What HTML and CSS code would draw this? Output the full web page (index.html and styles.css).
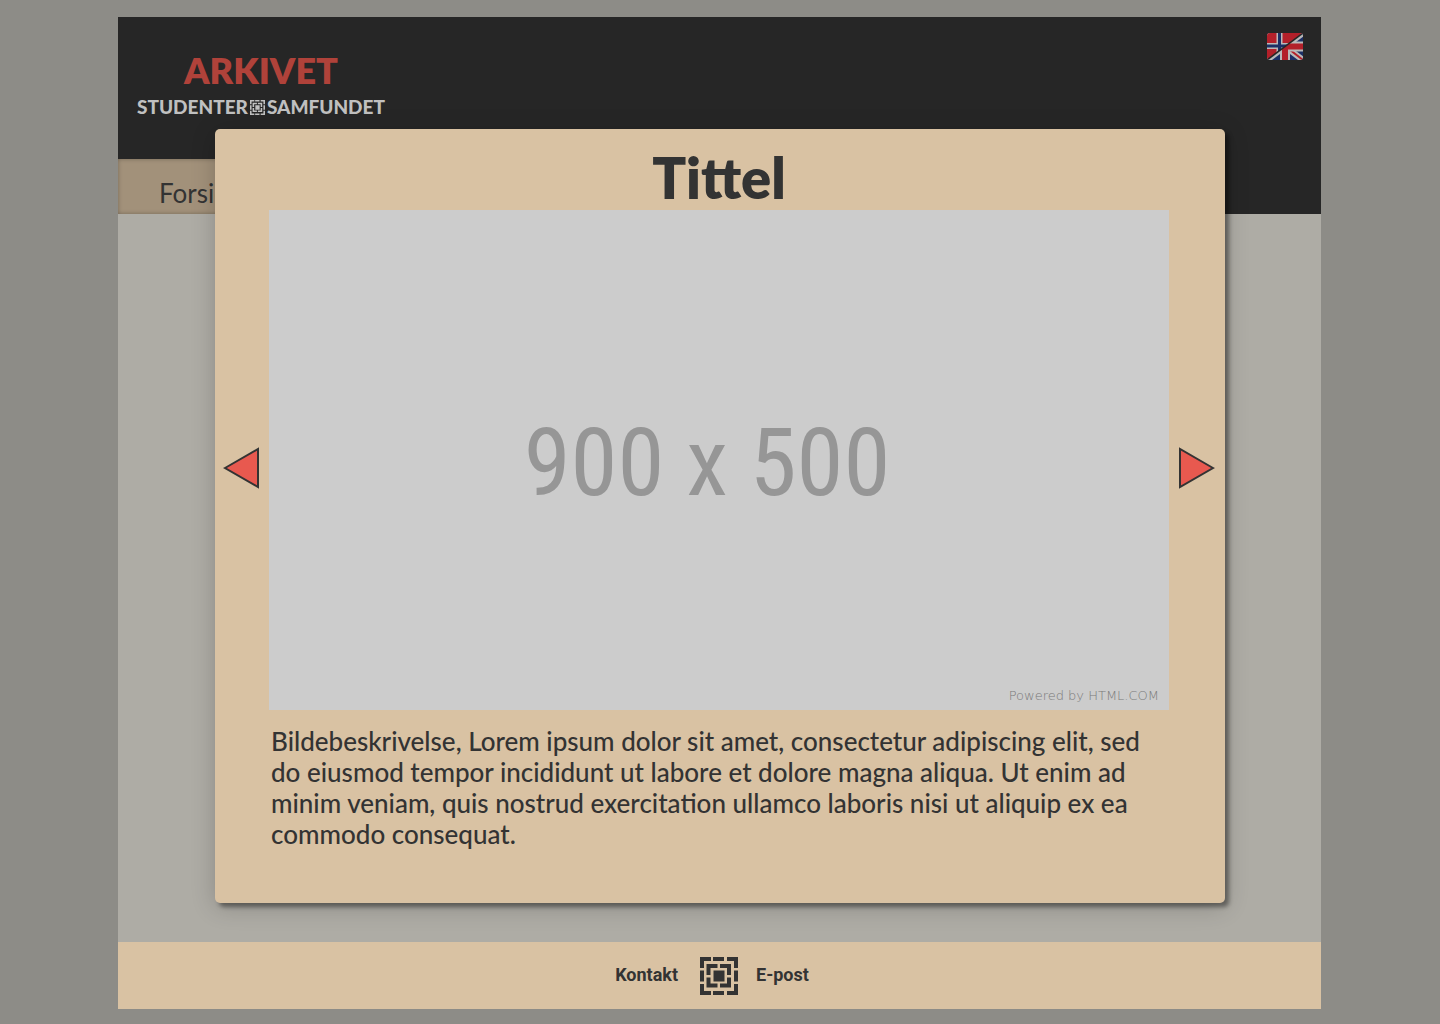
FILE: index.html
```html
<!DOCTYPE html>
<html lang="no">
<head>
<meta charset="utf-8">
<meta name="viewport" content="width=device-width, initial-scale=1">
<title>Arkivet – Studentersamfundet</title>
<link rel="stylesheet" href="styles.css">
</head>
<body>
<svg class="defs" aria-hidden="true">
  <symbol id="emblem" viewBox="0 0 38 38">
    <path d="M0 0h11v4H4v7H0zM13 0h11v4H13zM27 0h11v11h-4V4h-7zM0 13.500h4v11H0zM34 13.500h4v11h-4zM0 27h4v7h7v4H0zM13 34h11v4H13zM34 27h4v11H27v-4h7zM6.500 7h11v4h-7v7h-4zM20 7h11v11h-4v-7h-7zM6.500 20.500h4v6h7v4h-11zM27 20.500h4v10H20v-4h7zM13.500 13.500h11v11h-11z" fill="currentColor"/>
  </symbol>
</svg>
<div class="page">
  <header class="header">
    <div class="masthead">
      <a class="brand" href="#">
        <span class="brand-title">ARKIVET</span>
        <span class="brand-sub">STUDENTER<svg class="brand-emblem" aria-hidden="true"><use href="#emblem"/></svg>SAMFUNDET</span>
      </a>
      <button class="language" type="button" aria-label="Bytt språk">
        <svg viewBox="0 0 36 27" aria-hidden="true">
          <clipPath id="flag"><rect width="36" height="27" rx="3"/></clipPath>
          <clipPath id="upper"><path d="M0 0h36L0 27z"/></clipPath>
          <g clip-path="url(#flag)">
            <path fill="#1b2f66" d="M0 0h36v27H0z"/>
            <path d="M0 0l36 27M36 0L0 27" stroke="#b9b9b9" stroke-width="6"/>
            <path d="M18 13l18 14" stroke="#b3202a" stroke-width="2"/>
            <path d="M18 0v27M0 13.500h36" stroke="#b9b9b9" stroke-width="10"/>
            <path d="M18 0v27M0 13.500h36" stroke="#b3202a" stroke-width="6"/>
            <g clip-path="url(#upper)">
              <path fill="#b3202a" d="M0 0h36v27H0z"/>
              <path d="M12.500 0v27M0 13h36" stroke="#b9b9b9" stroke-width="6"/>
              <path d="M12.500 0v27M0 13h36" stroke="#1b2f66" stroke-width="3"/>
            </g>
            <path d="M0 27L36 0" stroke="#262626" stroke-width="1.500"/>
          </g>
        </svg>
      </button>
    </div>
    <nav class="nav"><a class="nav-link" href="#">Forside</a></nav>
  </header>
  <main class="content"></main>
  <footer class="footer">
    <a class="footer-link" href="#">Kontakt</a>
    <svg class="footer-emblem" aria-hidden="true"><use href="#emblem"/></svg>
    <a class="footer-link" href="#">E-post</a>
  </footer>
</div>
<div class="overlay">
  <section class="dialog" role="dialog" aria-labelledby="dialog-title">
    <h1 class="dialog-title" id="dialog-title">Tittel</h1>
    <div class="viewer">
      <button class="arrow" type="button" aria-label="Forrige bilde">
        <svg viewBox="0 0 38 42" aria-hidden="true"><path d="M2 21L35 2v38z"/></svg>
      </button>
      <div class="picture">
        <span class="picture-size">900 x 500</span>
        <span class="picture-credit">Powered by HTML.COM</span>
      </div>
      <button class="arrow" type="button" aria-label="Neste bilde">
        <svg viewBox="0 0 38 42" aria-hidden="true"><path d="M36 21L3 2v38z"/></svg>
      </button>
    </div>
    <p class="description">Bildebeskrivelse, Lorem ipsum dolor sit amet, consectetur adipiscing elit, sed do eiusmod tempor incididunt ut labore et dolore magna aliqua. Ut enim ad minim veniam, quis nostrud exercitation ullamco laboris nisi ut aliquip ex ea commodo consequat.</p>
  </section>
</div>
</body>
</html>
```
FILE: styles.css
```css
* { box-sizing: border-box; }

body {
  margin: 0;
  background: #8d8c87;
  color: #333;
  font-family: Lato, sans-serif;
}

a { color: inherit; text-decoration: none; }

button {
  padding: 0;
  border: 0;
  background: none;
  cursor: pointer;
}

svg { display: block; }

.defs { display: none; }

.page {
  display: flex;
  flex-direction: column;
  min-height: 100vh;
  padding: 17px 119px 15px 118px;
}

.header { background: #262626; }

.masthead {
  display: flex;
  justify-content: space-between;
  align-items: flex-start;
  min-height: 142px;
  padding: 16px 18px 0 19px;
}

.brand {
  display: flex;
  flex-direction: column;
  align-items: center;
  padding-top: 16px;
}

.brand-title {
  color: #b0423a;
  font-size: 36px;
  font-weight: 800;
  line-height: 43px;
}

.brand-sub {
  display: flex;
  align-items: center;
  gap: 2px;
  color: #c0c0c0;
  font-size: 19px;
  font-weight: 900;
  line-height: 30px;
}

.brand-emblem { width: 15px; height: 15px; }

.language { width: 36px; height: 27px; }

.language svg { width: 100%; height: 100%; }

.nav { display: flex; }

.nav-link {
  padding: 18px 41px 5px;
  background: #a2917a;
  box-shadow: inset 0 0 4px rgba(0, 0, 0, 0.3);
  font-size: 26px;
  line-height: 32px;
}

.content {
  flex: 1;
  background: #aeaca5;
}

.footer {
  display: flex;
  justify-content: center;
  align-items: center;
  min-height: 67px;
  padding-right: 15px;
  gap: 18px;
  background: #d9c2a3;
  font-family: Roboto, sans-serif;
  font-size: 18px;
  font-weight: 700;
}

.footer-link { padding-bottom: 2px; }

.footer-emblem {
  width: 38px;
  height: 38px;
  margin-left: 4px;
}

.overlay {
  position: absolute;
  top: 129px;
  left: 0;
  right: 0;
  display: flex;
  justify-content: center;
}

.dialog {
  width: 1010px;
  max-width: 100%;
  padding: 16px 10px 53px 8px;
  border-radius: 5px;
  background: #d9c2a3;
  box-shadow: 4px 4px 4px rgba(0, 0, 0, 0.4), 0 4px 24px rgba(0, 0, 0, 0.2);
}

.dialog-title {
  margin: 0;
  font-size: 56px;
  font-weight: 800;
  line-height: 65px;
  text-align: center;
}

.viewer {
  display: flex;
  align-items: center;
  gap: 8px;
}

.arrow {
  flex: none;
  padding-top: 16px;
}

.arrow svg {
  width: 38px;
  height: 42px;
  fill: #e8594f;
  stroke: #333;
  stroke-width: 2;
}

.picture {
  display: grid;
  grid-template-rows: 1fr auto;
  flex: 1;
  min-height: 500px;
  padding: 28px 10px 5px;
  background: #ccc;
  color: #969696;
}

.picture-size {
  place-self: center;
  padding-right: 24px;
  font-family: "Liberation Sans Narrow", "Arial Narrow", "Roboto Condensed", sans-serif;
  font-size: 95px;
  line-height: 120px;
}

.picture-credit {
  justify-self: end;
  color: #7a7a7a;
  font-family: "DejaVu Sans Light", "DejaVu Sans", sans-serif;
  font-size: 13px;
  line-height: 18px;
}

.description {
  margin: 16px 46px 0 48px;
  font-size: 26px;
  font-weight: 500;
  line-height: 31px;
}
```
